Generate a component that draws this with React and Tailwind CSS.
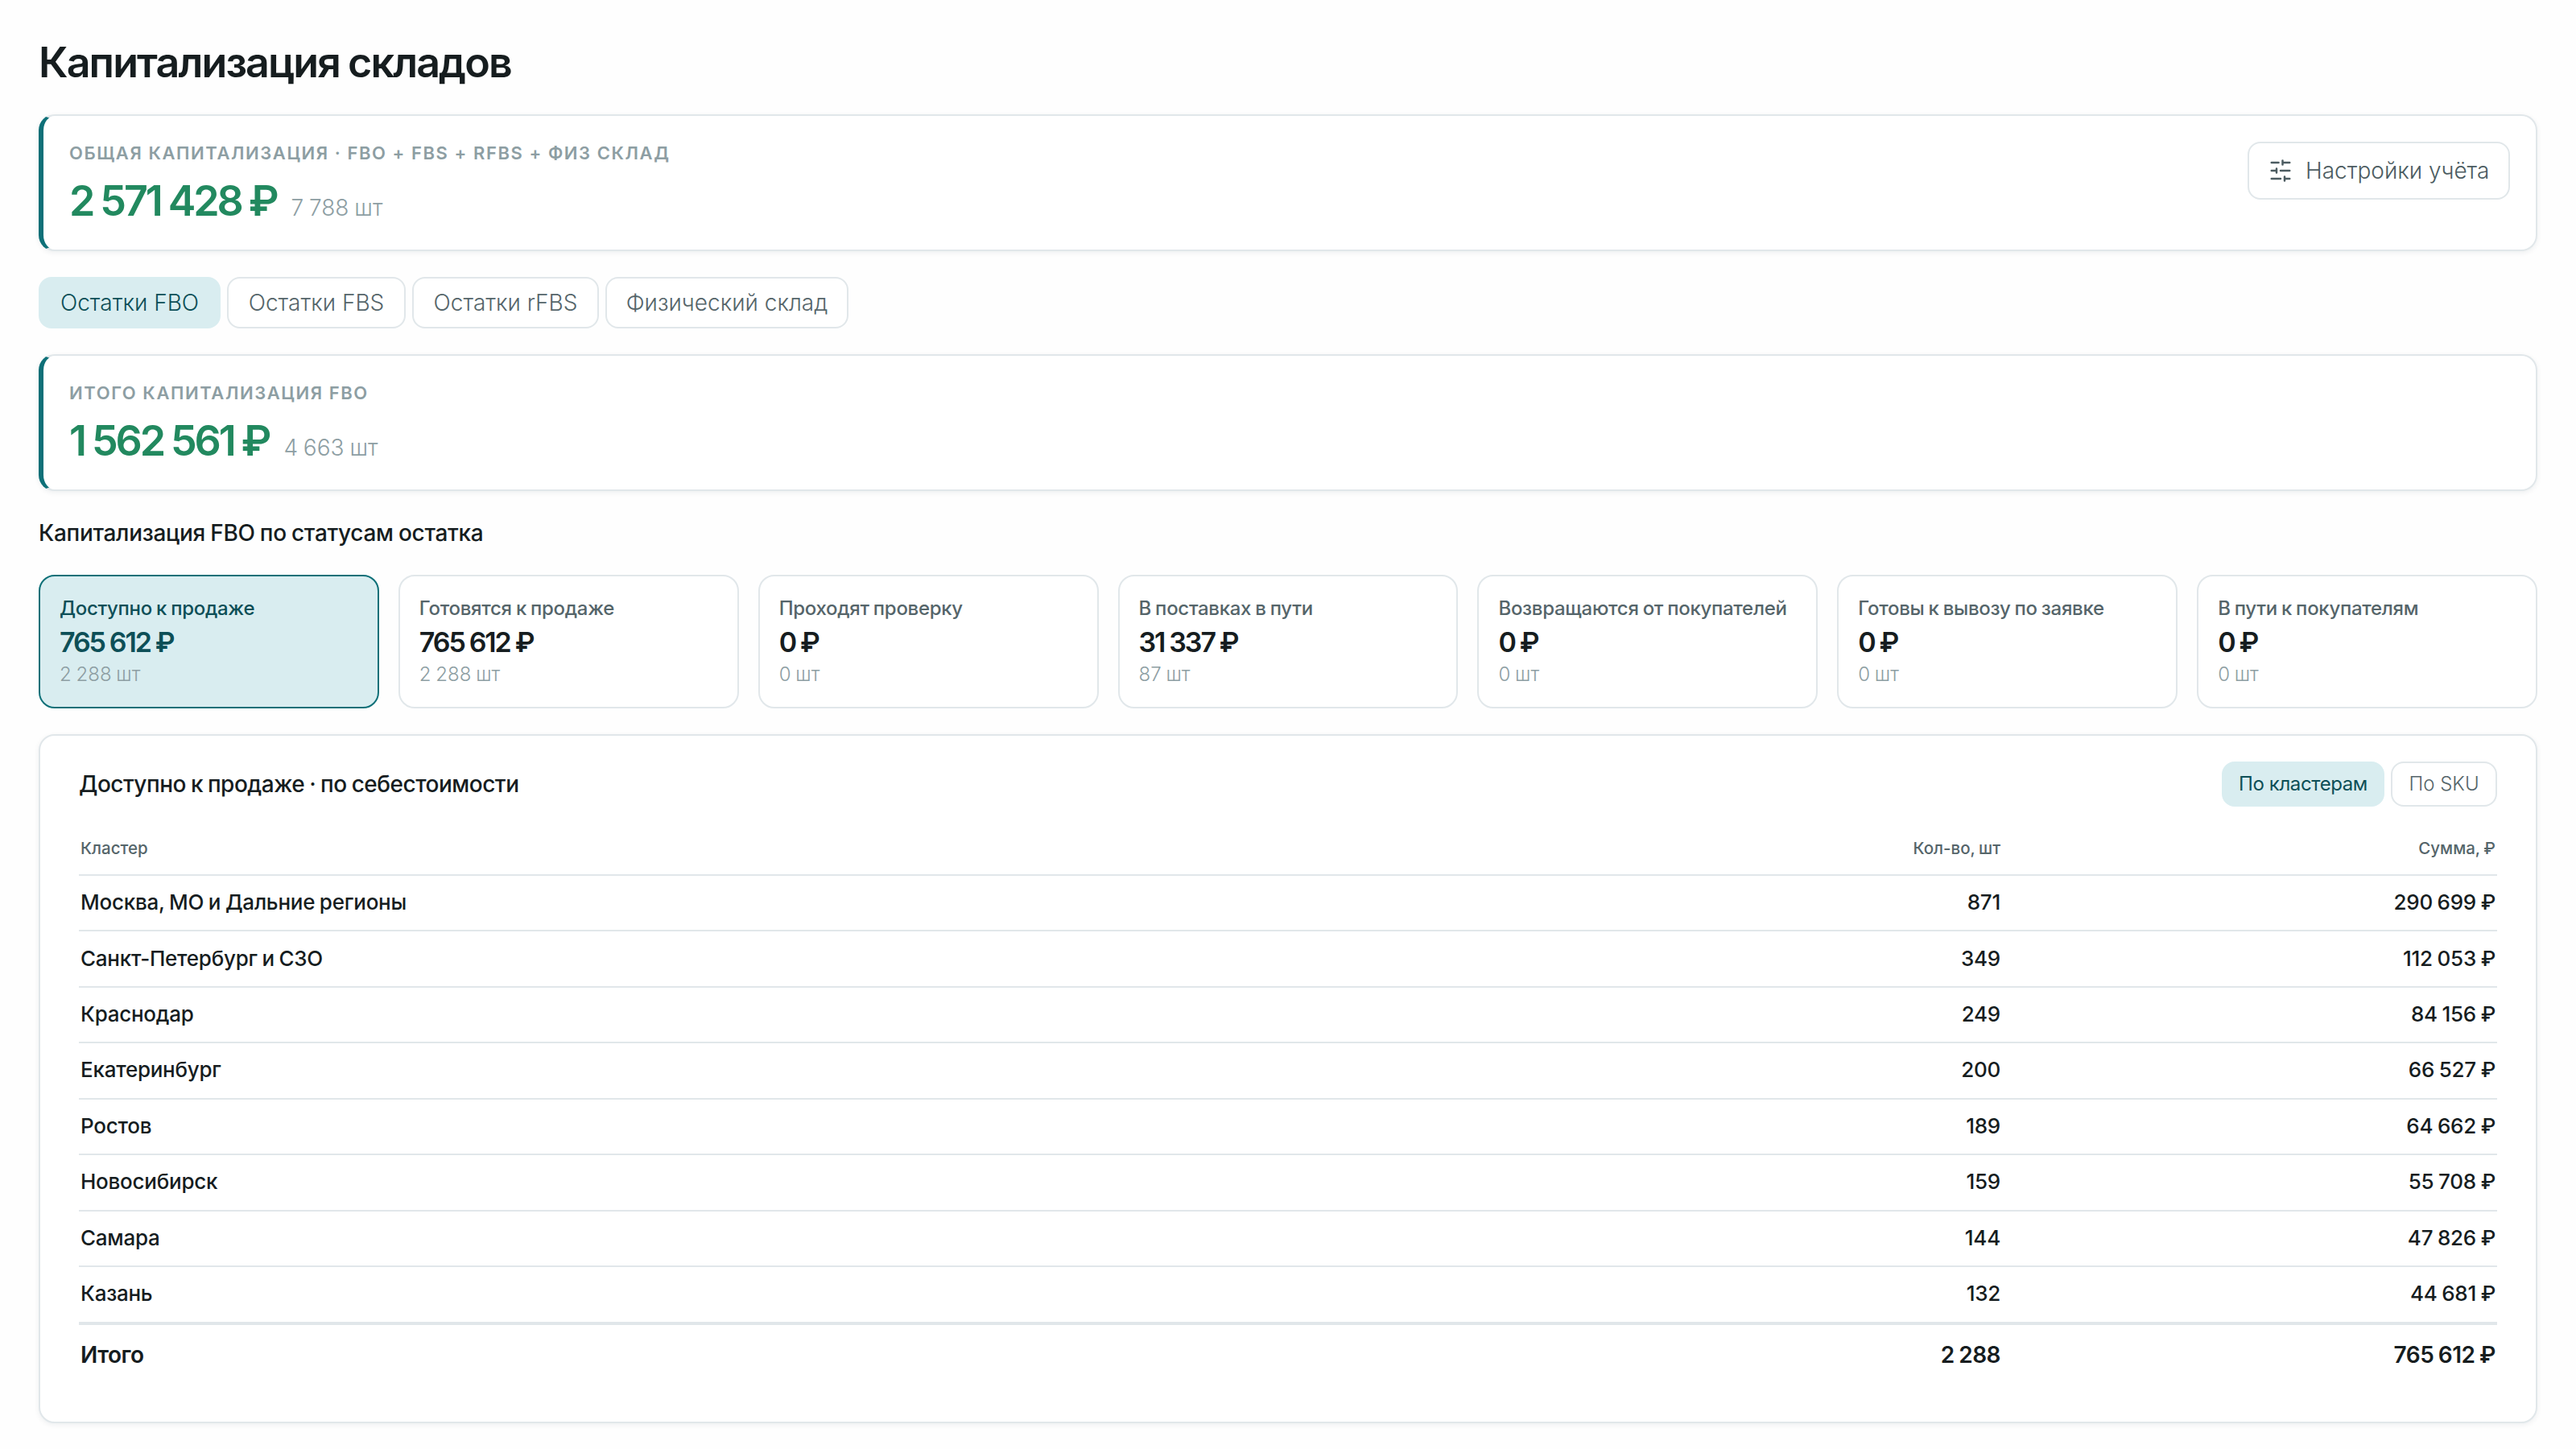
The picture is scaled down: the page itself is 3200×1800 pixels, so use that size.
import clsx from 'clsx'

const TABS = [
  { label: 'Остатки FBO', width: 'w-[226px]', active: true },
  { label: 'Остатки FBS', width: 'w-[222px]' },
  { label: 'Остатки rFBS', width: 'w-[232px]' },
  { label: 'Физический склад', width: 'w-[302px]' },
]

const STATUSES = [
  { label: 'Доступно к продаже', sum: '765 612 ₽', qty: '2 288 шт', active: true },
  { label: 'Готовятся к продаже', sum: '765 612 ₽', qty: '2 288 шт' },
  { label: 'Проходят проверку', sum: '0 ₽', qty: '0 шт' },
  { label: 'В поставках в пути', sum: '31 337 ₽', qty: '87 шт' },
  { label: 'Возвращаются от покупателей', sum: '0 ₽', qty: '0 шт' },
  { label: 'Готовы к вывозу по заявке', sum: '0 ₽', qty: '0 шт' },
  { label: 'В пути к покупателям', sum: '0 ₽', qty: '0 шт' },
]

const CLUSTERS = [
  { name: 'Москва, МО и Дальние регионы', qty: '871', sum: '290 699 ₽' },
  { name: 'Санкт-Петербург и СЗО', qty: '349', sum: '112 053 ₽' },
  { name: 'Краснодар', qty: '249', sum: '84 156 ₽' },
  { name: 'Екатеринбург', qty: '200', sum: '66 527 ₽' },
  { name: 'Ростов', qty: '189', sum: '64 662 ₽' },
  { name: 'Новосибирск', qty: '159', sum: '55 708 ₽' },
  { name: 'Самара', qty: '144', sum: '47 826 ₽' },
  { name: 'Казань', qty: '132', sum: '44 681 ₽' },
]

function SlidersIcon({ className }) {
  return (
    <svg
      viewBox="0 0 24 24"
      fill="none"
      stroke="currentColor"
      strokeWidth="2"
      strokeLinecap="round"
      strokeLinejoin="round"
      className={className}
    >
      <path d="M21 4h-7M10 4H3M21 12h-9M8 12H3M21 20h-5M12 20H3M14 2v4M8 10v4M16 18v4" />
    </svg>
  )
}

function SummaryCard({ label, sum, qty, children }) {
  return (
    <section className="flex h-[170px] items-start justify-between rounded-[20px] border-2 border-l-[6px] border-[#e1e7ea] border-l-[#0e7078] bg-white p-8 shadow-[0_2px_6px_rgba(15,40,50,0.07)]">
      <div>
        <p className="text-[22px] leading-[28px] font-semibold tracking-[1.56px] text-[#8d9ea3] uppercase [word-spacing:0px]">
          {label}
        </p>
        <div className="mt-3.5 flex items-baseline gap-[18px] leading-[64px]">
          <span className="text-[52px] font-semibold tracking-[-3.1px] text-[#22895f] [word-spacing:-1px]">{sum}</span>
          <span className="text-[28px] font-light text-[#8d9ea3] [word-spacing:-1px]">{qty}</span>
        </div>
      </div>
      {children}
    </section>
  )
}

function Pill({ label, active, className }) {
  return (
    <button
      className={clsx(
        'flex items-center justify-center rounded-2xl border-2 whitespace-nowrap',
        active ? 'border-[#d9edf0] bg-[#d9edf0] text-[#0d4f57]' : 'border-[#e1e7ea] bg-white text-[#55656a]',
        className,
      )}
    >
      {label}
    </button>
  )
}

function StatusCard({ label, sum, qty, active }) {
  return (
    <div
      className={clsx(
        'h-[166px] rounded-[20px] border-2 px-6 pt-[22px] whitespace-nowrap',
        active ? 'border-[#0e7078] bg-[#d9edf0]' : 'border-[#e1e7ea] bg-white',
      )}
    >
      <p
        className={clsx(
          'text-[24px] leading-[36px] font-medium tracking-[-0.3px] [word-spacing:-1px]',
          active ? 'text-[#0d4f57]' : 'text-[#55656a]',
        )}
      >
        {label}
      </p>
      <p
        className={clsx(
          'text-[34px] leading-[48px] font-semibold tracking-[-2.1px] [word-spacing:-0.5px]',
          active ? 'text-[#0d4f57]' : 'text-[#161d1f]',
        )}
      >
        {sum}
      </p>
      <p className="text-[24px] leading-[32px] font-light text-[#8d9ea3] [word-spacing:-1px]">{qty}</p>
    </div>
  )
}

function Row({ cells, className }) {
  return (
    <div className={clsx('grid grid-cols-[1fr_600px_615px] items-center px-0.5', className)}>
      <span>{cells[0]}</span>
      <span className="text-right">{cells[1]}</span>
      <span className="text-right">{cells[2]}</span>
    </div>
  )
}

export default function App() {
  return (
    <div className="h-[1800px] w-[3200px] overflow-hidden bg-[#fefefe] px-12 pt-[46px] font-['Inter','Noto_Sans',sans-serif] text-[#161d1f] [word-spacing:-1px]">
      <h1 className="h-[64px] text-[52px] leading-[64px] font-semibold tracking-[-1.9px]">
        Капитализация складов
      </h1>

      <div className="mt-8">
        <SummaryCard label="Общая капитализация · FBO + FBS + rFBS + физ склад" sum="2 571 428 ₽" qty="7 788 шт">
          <button className="flex h-[72px] w-[326px] items-center gap-4 rounded-2xl border-2 border-[#e1e7ea] bg-white px-6 text-[28px] font-light whitespace-nowrap text-[#4c5c61] [word-spacing:0px]">
            <SlidersIcon className="size-[30px] shrink-0" />
            Настройки учёта
          </button>
        </SummaryCard>
      </div>

      {/* Warehouse tabs */}
      <div className="mt-8 flex gap-2">
        {TABS.map((t) => (
          <Pill
            key={t.label}
            label={t.label}
            active={t.active}
            className={clsx('h-16 text-[28px] font-light [word-spacing:0px]', t.width)}
          />
        ))}
      </div>

      <div className="mt-8">
        <SummaryCard label="Итого капитализация FBO" sum="1 562 561 ₽" qty="4 663 шт" />
      </div>

      <h2 className="mt-8 text-[28px] leading-[40px] font-medium tracking-[-0.3px]">
        Капитализация FBO по статусам остатка
      </h2>
      <div className="mt-8 grid grid-cols-7 gap-6">
        {STATUSES.map((s) => (
          <StatusCard key={s.label} {...s} />
        ))}
      </div>

      {/* Cluster table */}
      <section className="mt-8 h-[856px] rounded-[20px] border-2 border-[#e1e7ea] bg-white px-12 pt-8 shadow-[0_2px_6px_rgba(15,40,50,0.07)]">
        <div className="flex h-14 items-center justify-between">
          <h2 className="text-[28px] font-medium tracking-[-0.5px]">Доступно к продаже · по себестоимости</h2>
          <div className="flex gap-2">
            <Pill label="По кластерам" active className="h-14 w-[202px] text-[24px] tracking-[-0.4px]" />
            <Pill label="По SKU" className="h-14 w-[132px] text-[24px] font-light [word-spacing:0px]" />
          </div>
        </div>
        <div className="mt-5">
          <Row
            cells={['Кластер', 'Кол-во, шт', 'Сумма, ₽']}
            className="h-[66px] border-b-2 border-[#e1e7ea] pt-px text-[20.5px] font-medium text-[#55656a]"
          />
          {CLUSTERS.map((c, i) => (
            <Row
              key={c.name}
              cells={[c.name, c.qty, c.sum]}
              className={clsx(
                'border-[#e1e7ea] pb-0.5 text-[26px] font-medium tracking-[-0.25px]',
                i === CLUSTERS.length - 1 ? 'h-[72px] border-b-4' : 'h-[69.43px] border-b-2',
              )}
            />
          ))}
          <Row cells={['Итого', '2 288', '765 612 ₽']} className="h-[74px] text-[28px] font-semibold tracking-[-0.5px]" />
        </div>
      </section>
    </div>
  )
}
